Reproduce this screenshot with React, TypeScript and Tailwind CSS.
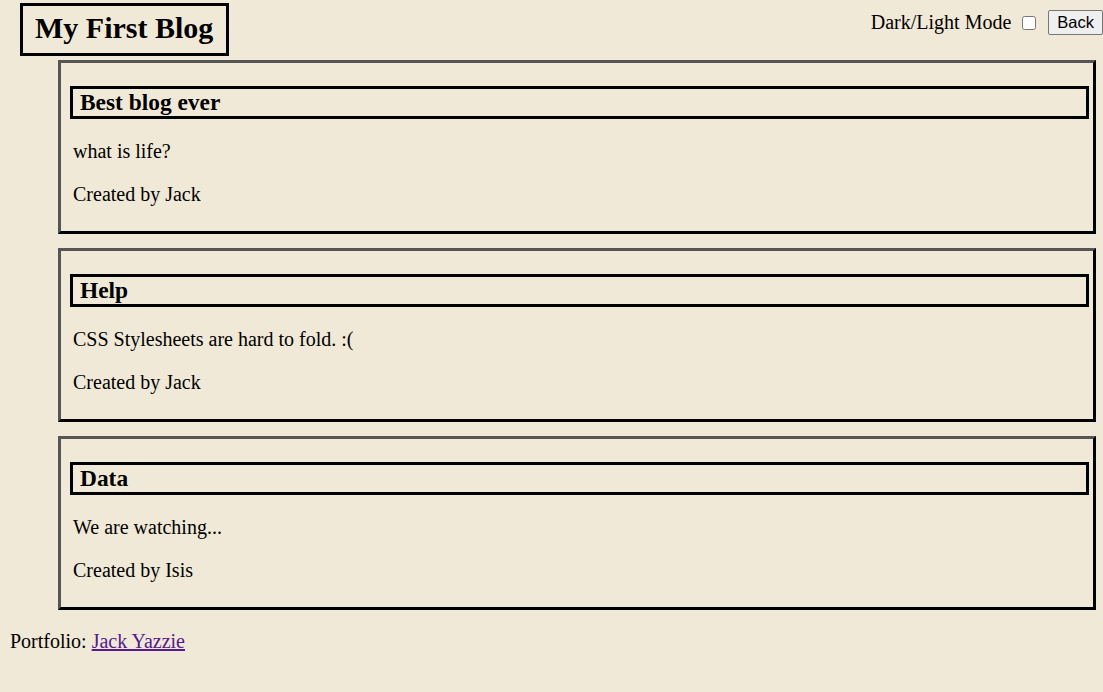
export default function App() {
  const posts = [
    { title: 'Best blog ever', body: 'what is life?', author: 'Jack' },
    { title: 'Help', body: 'CSS Stylesheets are hard to fold. :(', author: 'Jack' },
    { title: 'Data', body: 'We are watching...', author: 'Isis' },
  ];

  return (
    <div className="min-h-[692px] bg-[#f0e9d7] text-black font-['Liberation_Serif','Times_New_Roman',serif] text-[20px] leading-[23px] overflow-hidden">
      <header className="flex items-start justify-between pl-[20px] pt-[3px]">
        <h1 className="border-[3px] border-black pl-[12px] pr-[13px] pt-[5px] pb-[8px] text-[30px] leading-[34px] font-bold">
          My First Blog
        </h1>
        <div className="flex items-center pt-[7px]">
          <span className="text-[20px] leading-[23px]">Dark/Light Mode</span>
          <input type="checkbox" className="ml-[11px] w-[14px] h-[14px] accent-white" />
          <button className="ml-[12px] h-[25px] px-[8px] border border-[#767676] rounded-[2px] bg-[#efefef] font-['Liberation_Sans',Arial,sans-serif] text-[16.5px] leading-[19px]">
            Back
          </button>
        </div>
      </header>

      <main className="flex flex-col gap-[14px] ml-[58px] mr-[7px] mt-[4px]">
        {posts.map((post, i) => (
          <div
            key={i}
            className="border-[3px] border-t-[#555] border-l-[#555] border-r-black border-b-black pt-[23px] pb-[5px] pl-[9px] pr-[4px]"
          >
            <h2 className="border-[3px] border-black pl-[7px] text-[23.4px] leading-[27px] font-bold">
              {post.title}
            </h2>
            <p className="mt-[21px] pl-[3px]">{post.body}</p>
            <p className="mt-[20px] mb-[20px] pl-[3px]">Created by {post.author}</p>
          </div>
        ))}
      </main>

      <footer className="pl-[10px] mt-[20px]">
        Portfolio:{' '}
        <a href="#" className="text-[#551a8b] underline">
          Jack Yazzie
        </a>
      </footer>
    </div>
  );
}
